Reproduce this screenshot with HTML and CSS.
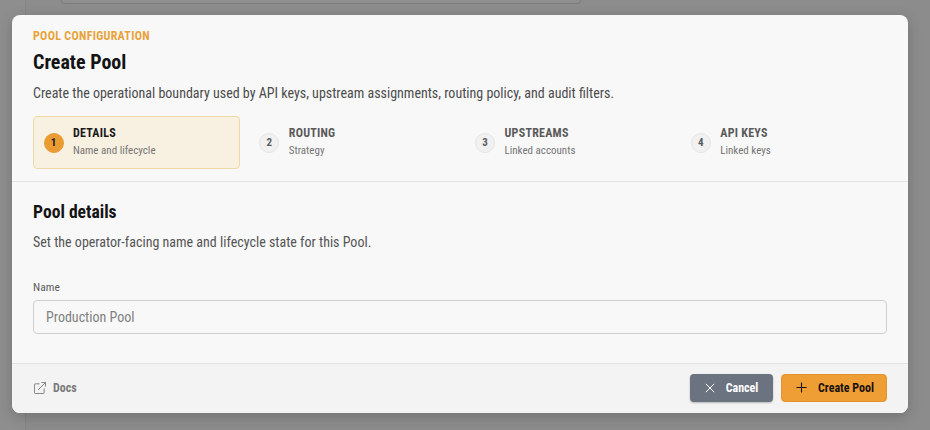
FILE: index.html
```html
<!DOCTYPE html>
<html lang="en">
<head>
    <meta charset="UTF-8">
    <meta name="viewport" content="width=device-width, initial-scale=1.0">
    <title>Create Pool</title>
    <link rel="stylesheet" href="styles.css">
</head>
<body>
    <div class="page-behind">
        <div class="page-card"></div>
    </div>

    <div class="modal">
        <div class="modal-header">
            <p class="eyebrow">POOL CONFIGURATION</p>
            <h2>Create Pool</h2>
            <p class="lead">Create the operational boundary used by API keys, upstream assignments, routing policy, and audit filters.</p>
            <div class="steps">
                <div class="step active">
                    <span class="step-num">1</span>
                    <div class="step-text">
                        <div class="step-title">DETAILS</div>
                        <div class="step-sub">Name and lifecycle</div>
                    </div>
                </div>
                <div class="step">
                    <span class="step-num">2</span>
                    <div class="step-text">
                        <div class="step-title">ROUTING</div>
                        <div class="step-sub">Strategy</div>
                    </div>
                </div>
                <div class="step">
                    <span class="step-num">3</span>
                    <div class="step-text">
                        <div class="step-title">UPSTREAMS</div>
                        <div class="step-sub">Linked accounts</div>
                    </div>
                </div>
                <div class="step">
                    <span class="step-num">4</span>
                    <div class="step-text">
                        <div class="step-title">API KEYS</div>
                        <div class="step-sub">Linked keys</div>
                    </div>
                </div>
            </div>
        </div>

        <div class="modal-body">
            <h3>Pool details</h3>
            <p class="section-lead">Set the operator-facing name and lifecycle state for this Pool.</p>
            <label class="field-label" for="pool-name">Name</label>
            <input type="text" id="pool-name" placeholder="Production Pool">
        </div>

        <div class="modal-footer">
            <a class="docs-link" href="#">
                <svg width="12" height="12" viewBox="0.5 0.5 13 13" fill="none" stroke="currentColor" stroke-width="1">
                    <path d="M6.500 2.500H2a1 1 0 0 0-1 1V12a1 1 0 0 0 1 1h8.500a1 1 0 0 0 1-1V7.500"/>
                    <path d="M5 9l8-8M8.500 1H13v4.500"/>
                </svg>
                Docs
            </a>
            <div class="footer-actions">
                <button class="btn btn-cancel">
                    <svg width="10" height="10" viewBox="0 0 12 12" fill="none" stroke="currentColor" stroke-width="1.200">
                        <path d="M1 1l10 10M11 1L1 11"/>
                    </svg>
                    Cancel
                </button>
                <button class="btn btn-create">
                    <svg width="11" height="11" viewBox="0 0 12 12" fill="none" stroke="currentColor" stroke-width="1.200">
                        <path d="M6 .5v11M.5 6h11"/>
                    </svg>
                    Create Pool
                </button>
            </div>
        </div>
    </div>
</body>
</html>
```

FILE: styles.css
```css
* {
    margin: 0;
    padding: 0;
    box-sizing: border-box;
    font-family: 'Roboto', 'Liberation Sans', sans-serif;
    font-stretch: 75%;
}
body {
    width: 930px;
    height: 430px;
    overflow: hidden;
    background: #8e8e8e;
    position: relative;
}
.page-behind {
    margin-left: 25px;
    height: 430px;
    border-left: 1px solid #858585;
    background: #8c8c8c;
    padding-left: 35px;
}
.page-card {
    width: 520px;
    height: 4px;
    background: #8f8f8f;
    border: 1px solid #7d7d7d;
    border-top: none;
    border-radius: 0 0 6px 6px;
}
.modal {
    position: absolute;
    left: 12px;
    top: 15px;
    width: 896px;
    height: 398px;
    display: flex;
    flex-direction: column;
    background: #f8f8f8;
    border-radius: 8px;
    box-shadow: 0 4px 14px rgba(0, 0, 0, 0.18);
    overflow: hidden;
}
.modal-header {
    height: 167px;
    padding: 14px 21px 0;
    border-bottom: 1px solid #e4e4e4;
}
.eyebrow {
    font-size: 12px;
    line-height: 14px;
    font-weight: 700;
    letter-spacing: 0.3px;
    color: #e9a23b;
}
h2 {
    margin-top: 7px;
    font-size: 20px;
    line-height: 24px;
    font-weight: 700;
    color: #141414;
}
.lead {
    margin-top: 10px;
    font-size: 14px;
    line-height: 18px;
    color: #4c4c4c;
}
.steps {
    display: grid;
    grid-template-columns: repeat(4, 1fr);
    gap: 9px;
    margin-top: 14px;
}
.step {
    height: 53px;
    display: flex;
    align-items: center;
    gap: 9.500px;
    padding: 0 9.500px;
    border: 1px solid transparent;
    border-radius: 4px;
}
.step.active {
    background: #f8f0e0;
    border-color: #f0d9a8;
}
.step-num {
    width: 20px;
    height: 20px;
    flex-shrink: 0;
    display: flex;
    justify-content: center;
    align-items: center;
    border-radius: 50%;
    border: 1px solid #e6e6e6;
    background: #f1f1f1;
    font-size: 11px;
    font-weight: 700;
    color: #5c5c5c;
}
.step.active .step-num {
    background: #ea9c33;
    border-color: #ea9c33;
    color: #1a1a1a;
}
.step-text {
    padding-bottom: 2px;
}
.step-title {
    font-size: 12px;
    line-height: 14px;
    font-weight: 700;
    letter-spacing: 0.25px;
    color: #5a5a5a;
}
.step.active .step-title {
    color: #1a1a1a;
}
.step-sub {
    margin-top: 4px;
    font-size: 11px;
    line-height: 14px;
    color: #757575;
}
.modal-body {
    flex: 1;
    padding: 20px 21px 0;
}
h3 {
    font-size: 17.600px;
    line-height: 20px;
    font-weight: 700;
    color: #141414;
}
.section-lead {
    margin-top: 11px;
    font-size: 14px;
    line-height: 18px;
    color: #555;
}
.field-label {
    display: block;
    margin-top: 29px;
    font-size: 11.500px;
    line-height: 14px;
    letter-spacing: 0.1px;
    color: #5c5c5c;
}
input {
    display: block;
    width: 100%;
    height: 34px;
    margin-top: 6px;
    padding: 0 12px;
    background: #f8f8f8;
    border: 1px solid #cfcfcf;
    border-radius: 4px;
    font-size: 14px;
}
input::placeholder {
    color: #808080;
}
.modal-footer {
    height: 50px;
    display: flex;
    justify-content: space-between;
    align-items: center;
    padding: 0 21px 2px;
    background: #f3f3f3;
    border-top: 1px solid #e4e4e4;
}
.docs-link {
    display: flex;
    align-items: center;
    gap: 7px;
    font-size: 12px;
    font-weight: 700;
    color: #7a7a7a;
    text-decoration: none;
}
.docs-link svg {
    margin-left: 1px;
}
.footer-actions {
    display: flex;
    gap: 8px;
}
.btn {
    height: 28px;
    display: flex;
    justify-content: center;
    align-items: center;
    gap: 11px;
    border: none;
    border-radius: 4px;
    font-size: 12px;
    font-weight: 700;
    cursor: pointer;
}
.btn-cancel {
    width: 83px;
    background: #6b7280;
    color: #fff;
    box-shadow: 0 1px 2px rgba(0, 0, 0, 0.25);
}
.btn-create {
    width: 106px;
    padding-left: 2px;
    background: #ef9e36;
    border: 1px solid #e5942c;
    color: #17110a;
}
```
